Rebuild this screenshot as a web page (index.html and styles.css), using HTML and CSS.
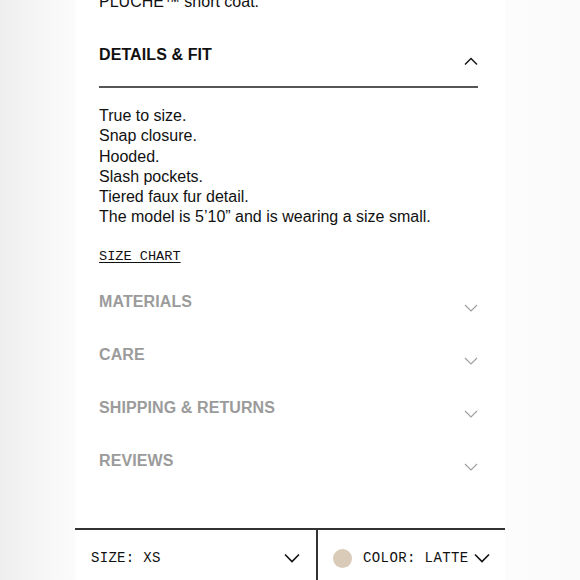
FILE: index.html
```html
<!DOCTYPE html>
<html lang="en">
<head>
<meta charset="utf-8">
<title>Details &amp; Fit</title>
<link rel="stylesheet" href="styles.css">
</head>
<body>
<div class="page">
  <div class="content">
    <p class="desc">PLUCHE™ short coat.</p>

    <section class="acc open">
      <div class="acc-head">
        <h2 class="acc-title">DETAILS &amp; FIT</h2>
        <svg class="chev chev-up" width="14" height="8" viewBox="0 0 14 8"><polyline points="1,7.5 7,1.5 13,7.5" fill="none" stroke="#111" stroke-width="1.4"/></svg>
      </div>
      <div class="acc-body">
        <ul class="facts">
          <li>True to size.</li>
          <li>Snap closure.</li>
          <li>Hooded.</li>
          <li>Slash pockets.</li>
          <li>Tiered faux fur detail.</li>
          <li>The model is 5’10” and is wearing a size small.</li>
        </ul>
        <a class="size-chart" href="#">SIZE CHART</a>
      </div>
    </section>

    <section class="acc">
      <div class="acc-head closed">
        <h2 class="acc-title muted">MATERIALS</h2>
        <svg class="chev chev-down" width="14" height="8" viewBox="0 0 14 8"><polyline points="1,1 7,7 13,1" fill="none" stroke="#9d9d9d" stroke-width="1.1"/></svg>
      </div>
    </section>
    <section class="acc">
      <div class="acc-head closed">
        <h2 class="acc-title muted">CARE</h2>
        <svg class="chev chev-down" width="14" height="8" viewBox="0 0 14 8"><polyline points="1,1 7,7 13,1" fill="none" stroke="#9d9d9d" stroke-width="1.1"/></svg>
      </div>
    </section>
    <section class="acc">
      <div class="acc-head closed">
        <h2 class="acc-title muted">SHIPPING &amp; RETURNS</h2>
        <svg class="chev chev-down" width="14" height="8" viewBox="0 0 14 8"><polyline points="1,1 7,7 13,1" fill="none" stroke="#9d9d9d" stroke-width="1.1"/></svg>
      </div>
    </section>
    <section class="acc">
      <div class="acc-head closed">
        <h2 class="acc-title muted">REVIEWS</h2>
        <svg class="chev chev-down" width="14" height="8" viewBox="0 0 14 8"><polyline points="1,1 7,7 13,1" fill="none" stroke="#9d9d9d" stroke-width="1.1"/></svg>
      </div>
    </section>
  </div>

  <div class="picker-bar">
    <div class="picker picker-size">
      <span class="picker-label">SIZE: XS</span>
      <svg class="picker-chev" width="16" height="10" viewBox="0 0 16 10"><polyline points="1,1.5 8,8.5 15,1.5" fill="none" stroke="#111" stroke-width="1.6"/></svg>
    </div>
    <div class="picker picker-color">
      <span class="swatch"></span>
      <span class="picker-label">COLOR: LATTE</span>
      <svg class="picker-chev" width="16" height="10" viewBox="0 0 16 10"><polyline points="1,1.5 8,8.5 15,1.5" fill="none" stroke="#111" stroke-width="1.6"/></svg>
    </div>
  </div>
</div>
</body>
</html>
```

FILE: styles.css
```css
html, body {
  margin: 0;
  padding: 0;
}

body {
  height: 580px;
  overflow: hidden;
  background: linear-gradient(to right, #eeeeee 0, #f6f6f6 40px, #fbfbfb 75px, #fcfcfc 505px, #fafafa 580px);
  font-family: "Liberation Sans", Arial, sans-serif;
  color: #111;
}

.page {
  width: 430px;
  margin-left: 75px;
  height: 586px;
  background: #fff;
  display: flex;
  flex-direction: column;
}

.content {
  padding: 0 27px 0 24px;
  flex: 1;
}

.desc {
  margin: -8px 0 0;
  font-size: 16px;
  line-height: 20px;
}

.acc-head {
  display: flex;
  justify-content: space-between;
  align-items: flex-start;
}

.open .acc-head {
  padding: 33px 0 21px;
  border-bottom: 2px solid #555;
}

.acc-head.closed {
  padding: 16px 0 17px;
}

.acc-title {
  margin: 0;
  font-size: 16px;
  line-height: 20px;
  font-weight: 700;
  letter-spacing: 0.1px;
  color: #111;
}

.acc-title.muted {
  color: #9b9b9b;
}

.chev {
  display: block;
}

.chev-up {
  margin-top: 12px;
}

.chev-down {
  margin-top: 12px;
}

.acc-body {
  padding: 18px 0 11px;
}

.facts {
  list-style: none;
  margin: 0;
  padding: 0;
  font-size: 16px;
  line-height: 20.3px;
}

.size-chart {
  display: inline-block;
  margin-top: 21px;
  font-family: "Liberation Mono", "DejaVu Sans Mono", monospace;
  font-size: 13.6px;
  line-height: 16px;
  color: #111;
  text-decoration: underline;
  text-underline-offset: 2px;
}

.picker-bar {
  display: flex;
  border-top: 2px solid #333;
  height: 56px;
}

.picker {
  display: flex;
  align-items: center;
  font-family: "Liberation Mono", "DejaVu Sans Mono", monospace;
  font-size: 14px;
  letter-spacing: 0.3px;
  color: #111;
  white-space: nowrap;
}

.picker-size {
  box-sizing: border-box;
  width: 243px;
  padding: 0 16px;
  justify-content: space-between;
  border-right: 2px solid #333;
}

.picker-color {
  flex: 1;
  padding-left: 15px;
}

.swatch {
  flex: none;
  width: 19px;
  height: 19px;
  border-radius: 50%;
  background: #d9cbb7;
  margin-right: 11px;
}

.picker-color .picker-label {
  letter-spacing: 0.4px;
  margin-right: 5px;
}

.picker-chev {
  display: block;
  flex: none;
}
```
